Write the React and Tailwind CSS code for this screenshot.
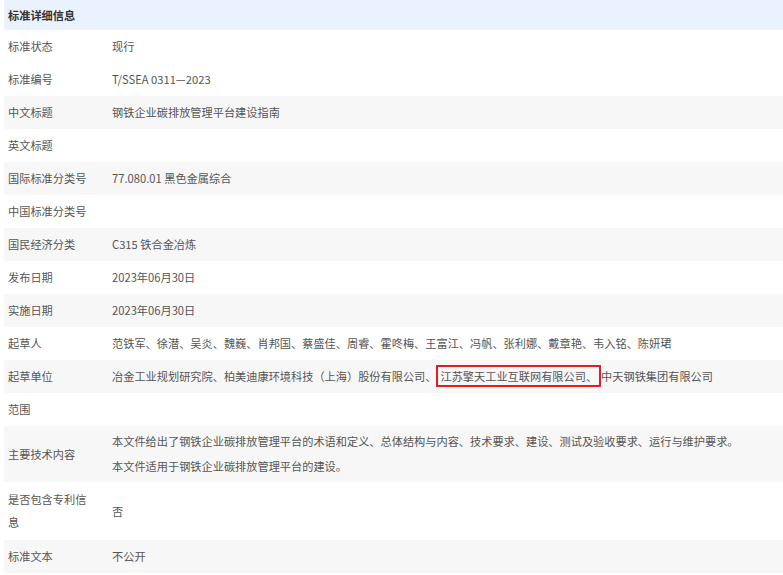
const rows = [
  ["标准状态", "现行", false],
  ["标准编号", "T/SSEA 0311—2023", false],
  ["中文标题", "钢铁企业碳排放管理平台建设指南", true],
  ["英文标题", "", false],
  ["国际标准分类号", "77.080.01 黑色金属综合", true],
  ["中国标准分类号", "", false],
  ["国民经济分类", "C315 铁合金冶炼", true],
  ["发布日期", "2023年06月30日", false],
  ["实施日期", "2023年06月30日", true],
  ["起草人", "范铁军、徐潜、吴炎、魏巍、肖邦国、蔡盛佳、周睿、霍咚梅、王富江、冯帆、张利娜、戴章艳、韦入铭、陈妍珺", false],
];

export default function App() {
  return (
    <div className="w-[783px] h-[575px] overflow-hidden bg-white pl-[4px] text-[11.2px] text-[#555]" style={{ fontFamily: '"Noto Sans CJK SC", "Liberation Sans", sans-serif' }}>
      <div className="h-[30px] bg-[#e9f2fd] flex items-center pl-[4px] font-bold text-[#333]">标准详细信息</div>
      {rows.map(([k, v, g]) => (
        <div key={k} className={`h-[33px] flex items-center ${g ? "bg-[#f7f7f7]" : ""}`}>
          <div className="w-[108px] pl-[4px] shrink-0">{k}</div>
          <div className="whitespace-nowrap">{v}</div>
        </div>
      ))}
      <div className="h-[33px] flex items-center bg-[#f7f7f7]">
        <div className="w-[108px] pl-[4px] shrink-0">起草单位</div>
        <div className="whitespace-nowrap">冶金工业规划研究院、柏美迪康环境科技（上海）股份有限公司、<span className="border-2 border-[#e02020] px-[2px] py-[1px]">江苏擎天工业互联网有限公司、</span>中天钢铁集团有限公司</div>
      </div>
      <div className="h-[33px] flex items-center">
        <div className="w-[108px] pl-[4px] shrink-0">范围</div>
      </div>
      <div className="h-[56px] flex items-center bg-[#f7f7f7]">
        <div className="w-[108px] pl-[4px] shrink-0">主要技术内容</div>
        <div className="leading-[25px] whitespace-nowrap">
          <div>本文件给出了钢铁企业碳排放管理平台的术语和定义、总体结构与内容、技术要求、建设、测试及验收要求、运行与维护要求。</div>
          <div>本文件适用于钢铁企业碳排放管理平台的建设。</div>
        </div>
      </div>
      <div className="h-[58px] flex items-center">
        <div className="w-[104px] pl-[4px] pr-[14px] shrink-0 leading-[23px] mr-[4px]">是否包含专利信息</div>
        <div>否</div>
      </div>
      <div className="h-[33px] flex items-center bg-[#f7f7f7]">
        <div className="w-[108px] pl-[4px] shrink-0">标准文本</div>
        <div>不公开</div>
      </div>
    </div>
  );
}
